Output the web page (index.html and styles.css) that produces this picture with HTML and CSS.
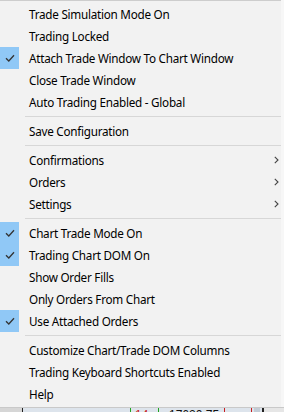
FILE: index.html
```html
<!DOCTYPE html>
<html lang="en">
	<head>
		<meta charset="UTF-8">
		<meta name="viewport" content="width=device-width, initial-scale=1.0">
		<title>Trade Menu</title>
		<link rel="stylesheet" href="styles.css">
	</head>
	<body>
		<!-- context menu -->
		<div class="menu">
			<div class="item"><span class="gutter"></span><span class="label">Trade Simulation Mode On</span></div>
			<div class="item"><span class="gutter"></span><span class="label">Trading Locked</span></div>
			<div class="item checked"><span class="gutter"><svg class="tick" width="10" height="8" viewBox="0 0 10 8"><path d="M1 4.2 L3.8 7 L9 1.2" fill="none" stroke="#333" stroke-width="1.3"/></svg></span><span class="label">Attach Trade Window To Chart Window</span></div>
			<div class="item"><span class="gutter"></span><span class="label">Close Trade Window</span></div>
			<div class="item"><span class="gutter"></span><span class="label">Auto Trading Enabled - Global</span></div>
			<div class="sep"></div>
			<div class="item"><span class="gutter"></span><span class="label">Save Configuration</span></div>
			<div class="sep"></div>
			<div class="item"><span class="gutter"></span><span class="label">Confirmations</span><svg class="arrow" width="5" height="8" viewBox="0 0 5 8"><path d="M0.8 0.8 L4 4 L0.8 7.2" fill="none" stroke="#444" stroke-width="1.1"/></svg></div>
			<div class="item"><span class="gutter"></span><span class="label">Orders</span><svg class="arrow" width="5" height="8" viewBox="0 0 5 8"><path d="M0.8 0.8 L4 4 L0.8 7.2" fill="none" stroke="#444" stroke-width="1.1"/></svg></div>
			<div class="item"><span class="gutter"></span><span class="label">Settings</span><svg class="arrow" width="5" height="8" viewBox="0 0 5 8"><path d="M0.8 0.8 L4 4 L0.8 7.2" fill="none" stroke="#444" stroke-width="1.1"/></svg></div>
			<div class="sep"></div>
			<div class="item checked"><span class="gutter"><svg class="tick" width="10" height="8" viewBox="0 0 10 8"><path d="M1 4.2 L3.8 7 L9 1.2" fill="none" stroke="#333" stroke-width="1.3"/></svg></span><span class="label">Chart Trade Mode On</span></div>
			<div class="item checked"><span class="gutter"><svg class="tick" width="10" height="8" viewBox="0 0 10 8"><path d="M1 4.2 L3.8 7 L9 1.2" fill="none" stroke="#333" stroke-width="1.3"/></svg></span><span class="label">Trading Chart DOM On</span></div>
			<div class="item"><span class="gutter"></span><span class="label">Show Order Fills</span></div>
			<div class="item"><span class="gutter"></span><span class="label">Only Orders From Chart</span></div>
			<div class="item checked"><span class="gutter"><svg class="tick" width="10" height="8" viewBox="0 0 10 8"><path d="M1 4.2 L3.8 7 L9 1.2" fill="none" stroke="#333" stroke-width="1.3"/></svg></span><span class="label">Use Attached Orders</span></div>
			<div class="sep"></div>
			<div class="item"><span class="gutter"></span><span class="label">Customize Chart/Trade DOM Columns</span></div>
			<div class="item"><span class="gutter"></span><span class="label">Trading Keyboard Shortcuts Enabled</span></div>
			<div class="item"><span class="gutter"></span><span class="label">Help</span></div>
		</div>

		<!-- chart visible under the menu -->
		<div class="chart-strip">
			<span class="cell c-gray w22"></span>
			<span class="cell c-dark"></span>
			<span class="cell c-blue w107"></span>
			<span class="cell c-green"></span>
			<span class="cell c-blue w27"><span class="red-num">14</span></span>
			<span class="cell c-green"></span>
			<span class="cell c-blue w65"><span class="price">17620.75</span></span>
			<span class="cell c-red"></span>
			<span class="cell c-blue w26"></span>
			<span class="cell c-red"></span>
			<span class="cell c-blue w2"></span>
			<span class="cell c-lt w6"></span>
			<span class="cell c-blue w2"></span>
			<span class="cell c-dark w2"></span>
			<span class="cell c-gray w20"></span>
		</div>
	</body>
</html>
```

FILE: styles.css
```css
html,
body {
	margin: 0;
	height: 100%;
	overflow: hidden;
	background: #f7f7f7;
	font-family: "Noto Sans", "Open Sans", sans-serif;
}

/* menu panel */
.menu {
	width: 281px;
	box-sizing: border-box;
	background: #f2f2f2;
	border-top: 1px solid #cdcdcd;
	padding: 2px 0 2px 0;
	color: #000;
}

.item {
	display: flex;
	align-items: center;
	height: 22px;
	font-size: 11.7px;
	letter-spacing: -0.25px;
	white-space: nowrap;
}

/* check column */
.gutter {
	display: flex;
	align-items: center;
	justify-content: center;
	width: 19px;
	height: 22px;
	margin-right: 10px;
	flex: none;
}

.checked .gutter {
	background: #90c8f6;
}

.label {
	flex: 1;
	line-height: 22px;
}

.arrow {
	margin-right: 2px;
}

.sep {
	height: 1px;
	margin: 3px 0 3px 25px;
	background: #d7d7d7;
}

/* bottom strip of chart */
.chart-strip {
	display: flex;
	height: 5px;
	overflow: hidden;
	border-top: 1px solid #c9c9c9;
}

.cell {
	display: block;
	height: 100%;
	width: 1px;
	flex: none;
	overflow: hidden;
}

.c-gray { background: #d6d6d6; }
.c-dark { background: #222; }
.c-blue { background: #dde4ec; }
.c-green { background: #1fa51f; }
.c-red { background: #c81e1e; }
.c-lt { background: #c3ccd6; }

.w22 { width: 22px; }
.w107 { width: 107px; }
.w27 { width: 27px; }
.w65 { width: 65px; }
.w26 { width: 26px; }
.w6 { width: 6px; }
.w2 { width: 2px; }
.w20 { width: 20px; background: #e6e6e6; }

.red-num,
.price {
	display: block;
	font-family: "Liberation Sans", sans-serif;
	font-size: 12px;
	line-height: 12px;
	margin-top: 1px;
}

.red-num {
	color: #c81e1e;
	margin-left: 4px;
}

.price {
	color: #111;
	margin-left: 10px;
}
```
